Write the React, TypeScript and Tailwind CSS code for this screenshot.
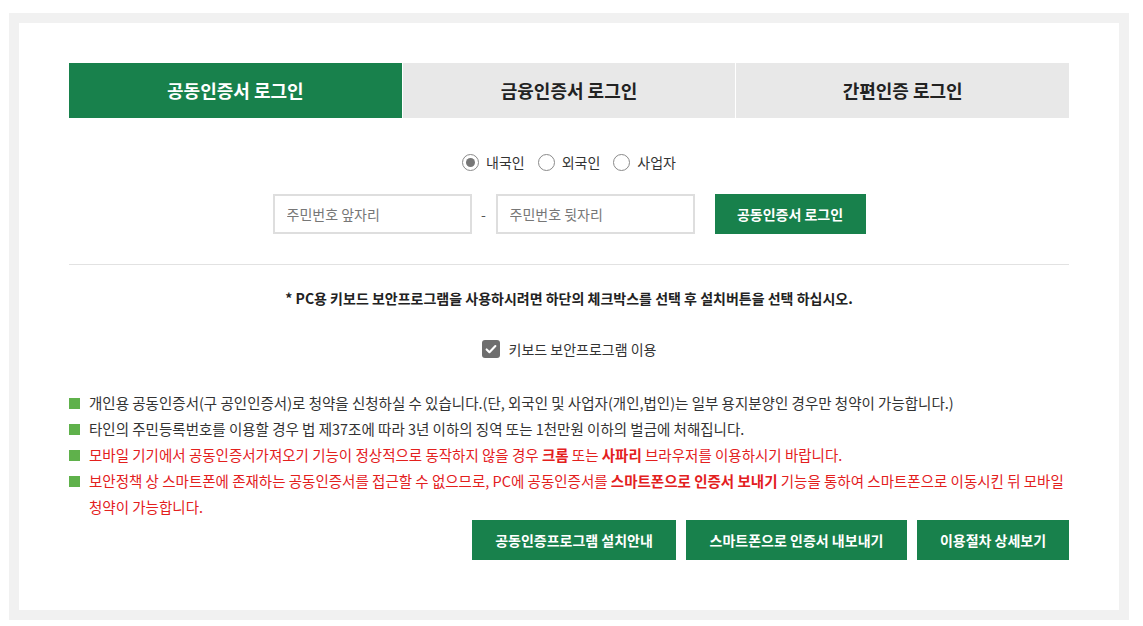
import { useState } from "react";

const font = { fontFamily: '"Noto Sans CJK KR", "Noto Sans", sans-serif' };

const tabs = ["공동인증서 로그인", "금융인증서 로그인", "간편인증 로그인"];
const userTypes = ["내국인", "외국인", "사업자"];

function Radio({ checked }: { checked: boolean }) {
  return (
    <span className="flex h-[17px] w-[17px] items-center justify-center rounded-full border border-[#8a8a8a] bg-white">
      {checked && <span className="h-[9px] w-[9px] rounded-full bg-[#777]" />}
    </span>
  );
}

function Bullet({ red, children }: { red?: boolean; children: React.ReactNode }) {
  return (
    <li className={`flex ${red ? "text-[#e3201d]" : "text-[#333]"}`}>
      <span className="mt-[8px] h-[11px] w-[11px] shrink-0 bg-[#5fb14b]" />
      <span className="ml-[9px]">{children}</span>
    </li>
  );
}

export default function App() {
  const [activeTab, setActiveTab] = useState(0);
  const [userType, setUserType] = useState(0);
  const [useKeyboard, setUseKeyboard] = useState(true);

  return (
    <div className="min-h-screen bg-white pl-[9px] pt-[13px]" style={font}>
      <div className="w-[1120px] bg-[#f1f1f1] p-[10px]">
        <div className="w-[1100px] bg-white px-[50px] pb-[50px] pt-[40px]">
          {/* tabs */}
          <div className="flex h-[55px] gap-px">
            {tabs.map((t, i) => (
              <button
                key={t}
                onClick={() => setActiveTab(i)}
                className={`flex-1 text-[18px] font-bold ${
                  activeTab === i ? "bg-[#18814c] text-white" : "bg-[#e8e8e8] text-[#222]"
                }`}
              >
                {t}
              </button>
            ))}
          </div>

          {/* user type */}
          <div className="mt-[34px] flex h-5 items-center justify-center gap-[13px] text-[14px] text-[#333]">
            {userTypes.map((u, i) => (
              <label key={u} className="flex cursor-pointer items-center gap-[7px]" onClick={() => setUserType(i)}>
                <Radio checked={userType === i} />
                <span>{u}</span>
              </label>
            ))}
          </div>

          {/* inputs */}
          <div className="mt-[22px] flex items-center justify-center">
            <input
              className="h-[40px] w-[199px] border-2 border-[#dedede] px-3 text-[14px] outline-none placeholder:text-[#777]"
              placeholder="주민번호 앞자리"
            />
            <span className="w-[24px] text-center text-[14px] text-[#555]">-</span>
            <input
              className="h-[40px] w-[199px] border-2 border-[#dedede] px-3 text-[14px] outline-none placeholder:text-[#777]"
              placeholder="주민번호 뒷자리"
            />
            <button className="ml-[20px] h-[40px] w-[151px] bg-[#18814c] text-[14px] font-bold text-white">
              공동인증서 로그인
            </button>
          </div>

          <div className="mt-[30px] border-t border-[#e2e2e2]" />

          <p className="mt-[23px] h-5 text-center text-[14px] font-semibold leading-5 text-[#222]">
            * PC용 키보드 보안프로그램을 사용하시려면 하단의 체크박스를 선택 후 설치버튼을 선택 하십시오.
          </p>

          <div className="mt-[31px] flex h-5 items-center justify-center">
            <label className="flex cursor-pointer items-center gap-[9px]" onClick={() => setUseKeyboard(!useKeyboard)}>
              <span className="flex h-[18px] w-[18px] items-center justify-center rounded-[3px] bg-[#6e6e6e]">
                {useKeyboard && (
                  <svg viewBox="0 0 16 16" className="h-[14px] w-[14px]">
                    <path d="M3 8.5l3.2 3.2L13 4.6" fill="none" stroke="white" strokeWidth="2.4" strokeLinecap="round" strokeLinejoin="round" />
                  </svg>
                )}
              </span>
              <span className="text-[14px] text-[#333]">키보드 보안프로그램 이용</span>
            </label>
          </div>

          <ul className="mt-[31px] text-[14.5px] leading-[26px]">
            <Bullet>
              개인용 공동인증서(구 공인인증서)로 청약을 신청하실 수 있습니다.(단, 외국인 및 사업자(개인,법인)는 일부 용지분양인 경우만 청약이 가능합니다.)
            </Bullet>
            <Bullet>타인의 주민등록번호를 이용할 경우 법 제37조에 따라 3년 이하의 징역 또는 1천만원 이하의 벌금에 처해집니다.</Bullet>
            <Bullet red>
              모바일 기기에서 공동인증서가져오기 기능이 정상적으로 동작하지 않을 경우 <b>크롬</b> 또는 <b>사파리</b> 브라우저를 이용하시기 바랍니다.
            </Bullet>
            <Bullet red>
              보안정책 상 스마트폰에 존재하는 공동인증서를 접근할 수 없으므로, PC에 공동인증서를 <b>스마트폰으로 인증서 보내기</b> 기능을 통하여 스마트폰으로 이동시킨 뒤 모바일
              <br />
              청약이 가능합니다.
            </Bullet>
          </ul>

          <div className="flex justify-end gap-[10px]">
            <button className="h-[40px] w-[204px] bg-[#18814c] text-[14px] font-bold text-white">공동인증프로그램 설치안내</button>
            <button className="h-[40px] w-[221px] bg-[#18814c] text-[14px] font-bold text-white">스마트폰으로 인증서 내보내기</button>
            <button className="h-[40px] w-[152px] bg-[#18814c] text-[14px] font-bold text-white">이용절차 상세보기</button>
          </div>
        </div>
      </div>
    </div>
  );
}
